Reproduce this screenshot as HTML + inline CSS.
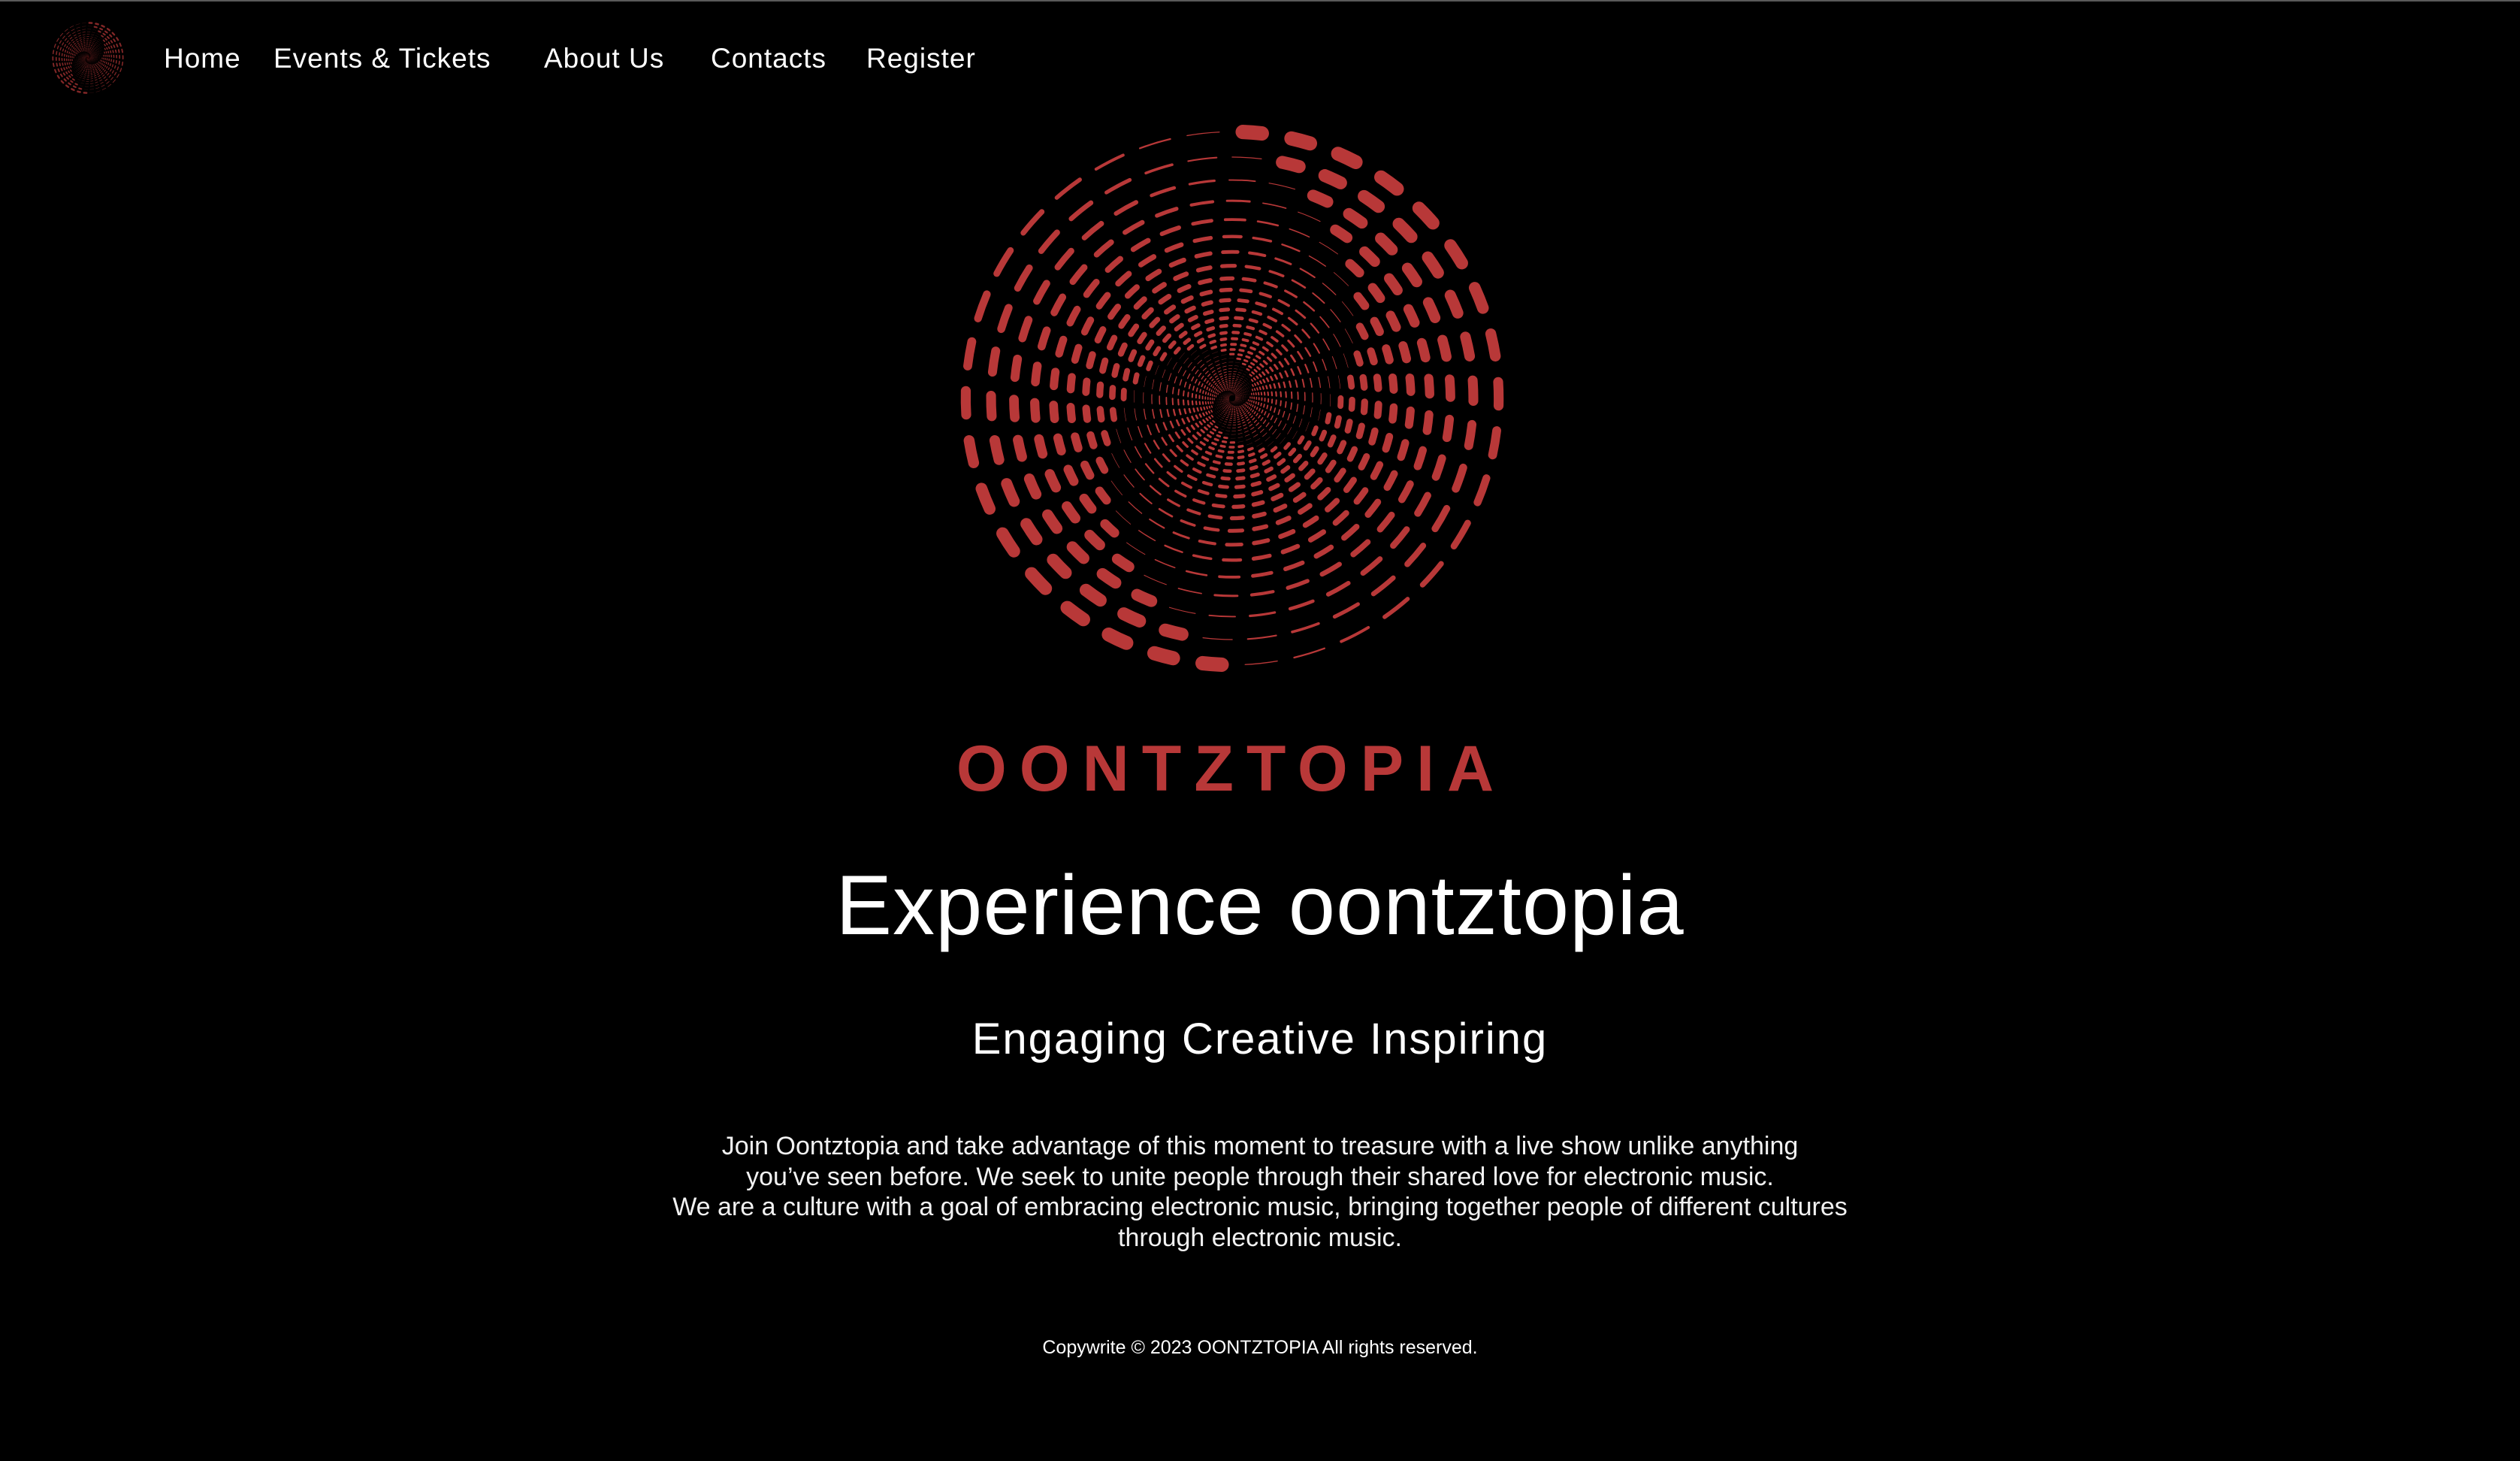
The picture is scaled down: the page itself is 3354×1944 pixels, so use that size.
<!DOCTYPE html>
<html><head><meta charset="utf-8">
<style>
html,body{margin:0;padding:0;background:#000;}
body{width:3354px;height:1944px;position:relative;overflow:hidden;font-family:"Liberation Sans",sans-serif;color:#fff;}
.topline{position:absolute;left:0;top:0;width:3354px;height:2px;background:#5a5a5a;}
.nav{position:absolute;top:56px;font-size:37px;line-height:44px;color:#fff;white-space:nowrap;letter-spacing:1px;}
.c{position:absolute;left:0;width:3354px;text-align:center;white-space:nowrap;}
#brand{top:975px;left:-38px;font-size:86px;font-weight:bold;color:#b83838;letter-spacing:17px;line-height:96px;}
#exp{top:1140px;font-size:112px;line-height:130px;letter-spacing:1px;}
#eng{top:1348px;font-size:58px;line-height:70px;letter-spacing:2px;}
#para{top:1505px;font-size:34px;line-height:40.5px;font-weight:normal;color:#f2f2f2;}
#copy{top:1779px;font-size:25px;line-height:28px;}
</style></head>
<body>
<div class="topline"></div>
<svg id="small" width="100" height="100" viewBox="-105 -105 210 210" style="position:absolute;left:67px;top:27px;opacity:.7"></svg>
<div class="nav" style="left:218px">Home</div>
<div class="nav" style="left:364px">Events &amp; Tickets</div>
<div class="nav" style="left:724px">About Us</div>
<div class="nav" style="left:946px">Contacts</div>
<div class="nav" style="left:1153px">Register</div>

<svg id="big" width="760" height="760" viewBox="-105 -105 210 210" style="position:absolute;left:1260px;top:150px"></svg>

<div class="c" id="brand">OONTZTOPIA</div>
<div class="c" id="exp">Experience oontztopia</div>
<div class="c" id="eng">Engaging Creative Inspiring</div>
<div class="c" id="para">Join Oontztopia and take advantage of this moment to treasure with a live show unlike anything<br>you’ve seen before. We seek to unite people through their shared love for electronic music.<br>We are a culture with a goal of embracing electronic music, bringing together people of different cultures<br>through electronic music.</div>
<div class="c" id="copy">Copywrite © 2023 OONTZTOPIA All rights reserved.</div>

<script>
(function(){
  var NS="http://www.w3.org/2000/svg";
  function build(svg){
    var g=document.createElementNS(NS,"g");
    var N=34, step=2*Math.PI/N;
    for(var k=0;k<46;k++){
      var r=98*Math.pow(0.905,k);
      if(r<1.2)break;
      var phi=k*0.17;
      var base=r*0.054;
      for(var i=0;i<N;i++){
        var t0=phi+i*step+0.02;
        var mid=t0+step*0.3;
        var local=((mid-phi)%Math.PI+Math.PI)%Math.PI;
        var f=Math.cos(local/2);
        var w=base*Math.max(0.07,Math.pow(f,1.1));
        var arc=step*0.68 - w/r;
        if(arc<step*0.14)arc=step*0.14;
        var a=mid-arc/2,b=mid+arc/2;
        var x1=r*Math.sin(a),y1=-r*Math.cos(a),x2=r*Math.sin(b),y2=-r*Math.cos(b);
        var p=document.createElementNS(NS,"path");
        p.setAttribute("d","M"+x1.toFixed(3)+" "+y1.toFixed(3)+"A"+r.toFixed(3)+" "+r.toFixed(3)+" 0 0 1 "+x2.toFixed(3)+" "+y2.toFixed(3));
        p.setAttribute("stroke","#b83838");
        p.setAttribute("stroke-width",w.toFixed(3));
        p.setAttribute("stroke-linecap","round");
        p.setAttribute("fill","none");
        g.appendChild(p);
      }
    }
    svg.appendChild(g);
  }
  build(document.getElementById("big"));
  build(document.getElementById("small"));
})();
</script>
</body></html>
